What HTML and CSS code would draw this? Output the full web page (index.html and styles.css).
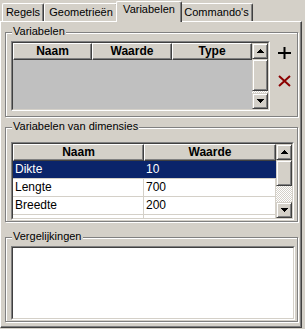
FILE: index.html
```html
<!DOCTYPE html>
<html lang="nl">
<head>
    <meta charset="UTF-8">
    <title>Variabelen</title>
    <link rel="stylesheet" href="styles.css">
</head>
<body>
    <div class="tabs">
        <div class="tab tab-regels">Regels</div>
        <div class="tab tab-geo">Geometrieën</div>
        <div class="tab tab-var active">Variabelen</div>
        <div class="tab tab-cmd">Commando's</div>
    </div>

    <div class="panel">
        <div class="group group-vars">
            <span class="group-label">Variabelen</span>
            <div class="sunken list-vars">
                <div class="sunken-inner">
                    <div class="list-main">
                        <div class="header">
                            <div class="hcell w-79">Naam</div>
                            <div class="hcell w-80">Waarde</div>
                            <div class="hcell w-80">Type</div>
                        </div>
                        <div class="list-empty"></div>
                    </div>
                    <div class="scrollbar">
                        <div class="sb-btn">
                            <svg width="7" height="4" viewBox="0 0 7 4"><path d="M3 0h1v1h1v1h1v1h1v1H0V3h1V2h1V1h1z"/></svg>
                        </div>
                        <div class="sb-thumb thumb-vars"></div>
                        <div class="sb-track"></div>
                        <div class="sb-btn">
                            <svg width="7" height="4" viewBox="0 0 7 4"><path d="M0 0h7v1H6v1H5v1H4v1H3V3H2V2H1V1H0z"/></svg>
                        </div>
                    </div>
                </div>
            </div>
            <div class="tools">
                <svg class="tool-add" width="13" height="12" viewBox="0 0 13 12">
                    <path d="M5.5 0h2v5h5.5v2H7.5v5h-2V7H0V5h5.5z" fill="#000"/>
                </svg>
                <svg class="tool-del" width="13" height="12" viewBox="0 0 13 12">
                    <path d="M1 1L12 11M12 1L1 11" stroke="#8b0000" stroke-width="2" fill="none"/>
                </svg>
            </div>
        </div>

        <div class="group group-dims">
            <span class="group-label">Variabelen van dimensies</span>
            <div class="sunken list-dims">
                <div class="sunken-inner">
                    <div class="list-main">
                        <div class="header">
                            <div class="hcell w-131">Naam</div>
                            <div class="hcell w-132">Waarde</div>
                        </div>
                        <div class="rows">
                            <div class="row selected">
                                <div class="cell w-131">Dikte</div>
                                <div class="cell w-132">10</div>
                            </div>
                            <div class="row">
                                <div class="cell w-131">Lengte</div>
                                <div class="cell w-132">700</div>
                            </div>
                            <div class="row">
                                <div class="cell w-131">Breedte</div>
                                <div class="cell w-132">200</div>
                            </div>
                            <div class="row">
                                <div class="cell w-131">Inkfrees</div>
                                <div class="cell w-132">15</div>
                            </div>
                        </div>
                    </div>
                    <div class="scrollbar">
                        <div class="sb-btn">
                            <svg width="7" height="4" viewBox="0 0 7 4"><path d="M3 0h1v1h1v1h1v1h1v1H0V3h1V2h1V1h1z"/></svg>
                        </div>
                        <div class="sb-thumb thumb-dims"></div>
                        <div class="sb-track"></div>
                        <div class="sb-btn">
                            <svg width="7" height="4" viewBox="0 0 7 4"><path d="M0 0h7v1H6v1H5v1H4v1H3V3H2V2H1V1H0z"/></svg>
                        </div>
                    </div>
                </div>
            </div>
        </div>

        <div class="group group-eq">
            <span class="group-label">Vergelijkingen</span>
            <div class="sunken text-eq">
                <div class="sunken-inner white"></div>
            </div>
        </div>
    </div>
</body>
</html>
```

FILE: styles.css
```css
* {
    box-sizing: border-box;
}

body {
    margin: 0;
    width: 305px;
    height: 329px;
    overflow: hidden;
    background-color: #d4d0c8;
    font-family: "Liberation Sans", Arial, sans-serif;
    font-size: 11px;
    color: #000;
}

/* tab strip */
.tabs {
    display: flex;
    align-items: flex-end;
    height: 21px;
    padding-left: 2px;
}

.tab {
    height: 18px;
    border-top: 1px solid #fff;
    border-left: 1px solid #fff;
    border-right: 1px solid #404040;
    box-shadow: inset -1px 0 #808080;
    border-radius: 2px 2px 0 0;
    text-align: center;
    line-height: 17px;
    white-space: nowrap;
}

.tab-regels { width: 42px; }
.tab-geo { width: 74px; }
.tab-var { width: 62px; }
.tab-cmd { width: 73px; }

.tab.active {
    position: relative;
    z-index: 1;
    height: 21px;
    width: 66px;
    margin: 0 -2px -1px;
    line-height: 15px;
    background-color: #d4d0c8;
}

/* tab page */
.panel {
    width: 302px;
    height: 307px;
    border: 1px solid;
    border-color: #fff #404040 #404040 #fff;
    box-shadow: inset -1px -1px #808080;
    padding-left: 4px;
}

.group {
    position: relative;
    width: 293px;
    border: 1px solid #808080;
    box-shadow: inset 1px 1px #fff, 1px 1px #fff;
    padding: 8px 5px 0 5px;
}

.group-label {
    position: absolute;
    top: -8px;
    left: 6px;
    padding: 0 1px;
    line-height: 13px;
    background-color: #d4d0c8;
}

.group-vars {
    display: flex;
    margin-top: 10px;
    height: 85px;
}

.group-dims {
    margin-top: 10px;
    height: 95px;
    padding-top: 14px;
}

.group-eq {
    margin-top: 15px;
    height: 85px;
}

/* sunken 3d frame */
.sunken {
    border: 1px solid;
    border-color: #808080 #fff #fff #808080;
}

.sunken-inner {
    display: flex;
    height: 100%;
    border: 1px solid;
    border-color: #404040 #d4d0c8 #d4d0c8 #404040;
}

.sunken-inner.white {
    background-color: #fff;
}

.list-vars {
    width: 259px;
    height: 70px;
}

.list-dims {
    width: 283px;
    height: 78px;
}

.text-eq {
    width: 284px;
    height: 74px;
}

.list-main {
    flex: 1;
    display: flex;
    flex-direction: column;
    overflow: hidden;
    font-size: 12px;
}

.header {
    display: flex;
    height: 17px;
    flex-shrink: 0;
}

.hcell {
    height: 17px;
    border: 1px solid;
    border-color: #fff #404040 #404040 #fff;
    box-shadow: inset -1px -1px #808080;
    background-color: #d4d0c8;
    font-weight: bold;
    text-align: center;
    line-height: 14px;
}

.w-79 { width: 79px; }
.w-80 { width: 80px; }
.w-131 { width: 131px; }
.w-132 { width: 132px; }

.list-empty {
    flex: 1;
    background-color: #c0c0c0;
}

.rows {
    flex: 1;
    background-color: #fff;
}

.row {
    display: flex;
    height: 18px;
    border-bottom: 1px solid #d4d0c8;
}

.cell {
    height: 17px;
    padding-left: 2px;
    line-height: 17px;
    border-right: 1px solid #d4d0c8;
    white-space: nowrap;
}

.row.selected {
    background-color: #0a246a;
    color: #fff;
}

.row.selected .cell {
    border-right-color: #0a246a;
}

/* scrollbar */
.scrollbar {
    width: 16px;
    display: flex;
    flex-direction: column;
}

.sb-btn,
.sb-thumb {
    flex-shrink: 0;
    border: 1px solid;
    border-color: #d4d0c8 #404040 #404040 #d4d0c8;
    box-shadow: inset 1px 1px #fff, inset -1px -1px #808080;
    background-color: #d4d0c8;
}

.sb-btn {
    height: 16px;
    display: flex;
    align-items: center;
    justify-content: center;
}

.sb-btn svg {
    display: block;
}

.thumb-vars { height: 32px; }
.thumb-dims { height: 26px; }

.sb-track {
    flex: 1;
    background: repeating-conic-gradient(#fff 0 25%, #d4d0c8 0 50%) 0 0 / 2px 2px;
}

/* add / delete buttons */
.tools {
    display: flex;
    flex-direction: column;
    margin-left: 8px;
}

.tool-add {
    margin-top: 6px;
}

.tool-del {
    margin-top: 16px;
}
```
